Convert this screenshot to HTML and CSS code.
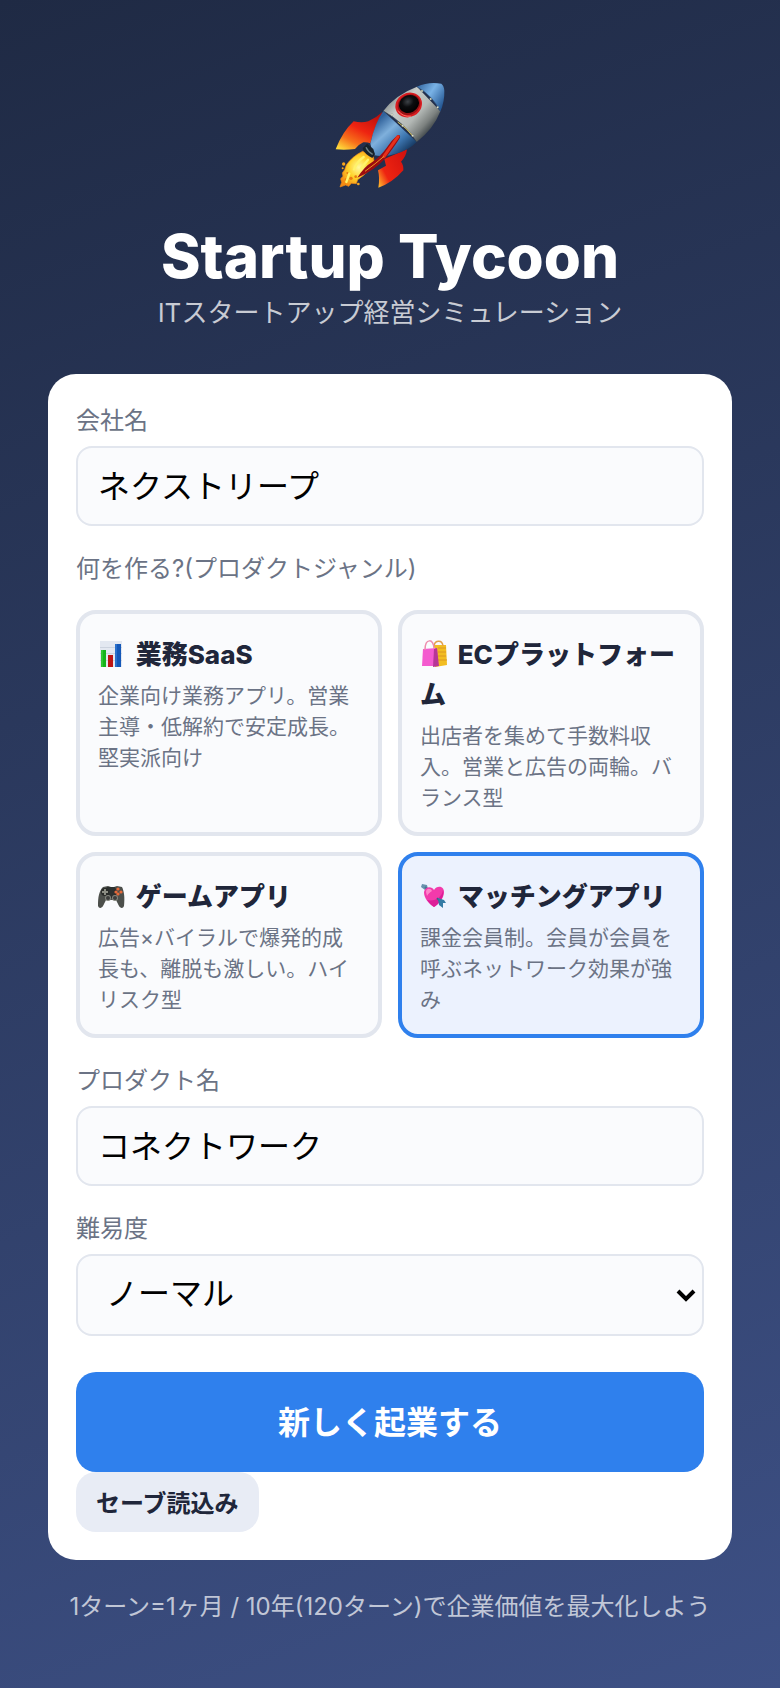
FILE: index.html
```
<!DOCTYPE html>
<html lang="ja">
<head>
  <meta charset="UTF-8">
  <meta name="viewport" content="width=device-width, initial-scale=1">
  <title>Startup Tycoon</title>
  <link rel="stylesheet" href="styles.css">
</head>
<body>

<main class="start">
  <header class="hero">
    <svg class="rocket" viewBox="0 0 480 450" aria-hidden="true">
      <defs>
        <linearGradient id="hull" gradientUnits="userSpaceOnUse" x1="240" y1="120" x2="350" y2="220">
          <stop offset="0" stop-color="#8f9696"/>
          <stop offset=".25" stop-color="#c9cdca"/>
          <stop offset=".6" stop-color="#b4b9b6"/>
          <stop offset=".85" stop-color="#7c817f"/>
          <stop offset="1" stop-color="#444b4e"/>
        </linearGradient>
        <linearGradient id="blue" gradientUnits="userSpaceOnUse" x1="205" y1="180" x2="290" y2="275">
          <stop offset="0" stop-color="#31629b"/>
          <stop offset=".35" stop-color="#7fb0dc"/>
          <stop offset=".7" stop-color="#3d76b0"/>
          <stop offset="1" stop-color="#173a63"/>
        </linearGradient>
        <linearGradient id="nose" x1="0" y1="0" x2="1" y2=".7">
          <stop offset="0" stop-color="#2f629c"/>
          <stop offset=".5" stop-color="#79b2e6"/>
          <stop offset="1" stop-color="#255894"/>
        </linearGradient>
        <linearGradient id="fin" x1=".8" y1="0" x2=".15" y2="1">
          <stop offset="0" stop-color="#b80f0c"/>
          <stop offset=".45" stop-color="#ee2411"/>
          <stop offset=".75" stop-color="#f7701a"/>
          <stop offset="1" stop-color="#ffd83a"/>
        </linearGradient>
        <linearGradient id="fin2" x1="1" y1=".2" x2="0" y2=".9">
          <stop offset="0" stop-color="#d3120e"/>
          <stop offset=".7" stop-color="#ee2411"/>
          <stop offset="1" stop-color="#ffb52c"/>
        </linearGradient>
        <radialGradient id="flame" cx=".55" cy=".45" r=".6">
          <stop offset="0" stop-color="#fff9a0"/>
          <stop offset=".5" stop-color="#ffd42c"/>
          <stop offset="1" stop-color="#f58a12"/>
        </radialGradient>
        <radialGradient id="glass" cx=".5" cy=".35" r=".65">
          <stop offset="0" stop-color="#3d4247"/>
          <stop offset=".45" stop-color="#0b0c0e"/>
          <stop offset="1" stop-color="#000"/>
        </radialGradient>
      </defs>
      <path fill="url(#fin)" d="M218 155Q200 172 175 184Q155 190 131 184Q98 214 77 268Q105 271 135 267Q148 252 160 247Q172 246 181 250Q192 203 218 155Z"/>
      <path fill="url(#fin2)" d="M291 268L223 297L228 317L204 331Q210 354 205 383Q247 369 280 331Q281 315 273 305Q289 289 291 268Z"/>
      <path fill="url(#flame)" stroke="#ee8a16" stroke-width="2" d="M158 274Q127 289 109 315L104 329L97 339L99 349L92 356L95 367L90 381L107 375L116 379L124 370L139 371L143 359Q174 340 193 309L190 290Z"/>
      <g fill="#f9a51d"><circle cx="101" cy="312" r="5"/><circle cx="98" cy="325" r="3"/><circle cx="145" cy="372" r="4"/></g>
      <g fill="#e97912"><circle cx="108" cy="359" r="4"/><circle cx="123" cy="355" r="5"/><circle cx="112" cy="339" r="3"/><circle cx="137" cy="350" r="4"/></g>
      <path fill="none" stroke="#fff36a" stroke-width="7" stroke-linecap="round" d="M161 291Q142 304 132 328M174 299L154 324M118 341L109 366"/>
      <path fill="url(#blue)" d="M220 153Q194 190 181 251L190 285Q221 293 258 281Q297 270 320 246Z"/>
      <path fill="url(#hull)" d="M220 153Q255 105 321 80L391 154Q371 207 320 246Q282 187 220 153Z"/>
      <path fill="url(#nose)" d="M321 80Q356 64 394 71Q402 77 403 92Q404 125 391 154Q369 108 321 80Z"/>
      <path fill="none" stroke="#345780" stroke-width="2" d="M321 80Q369 108 391 154"/>
      <path fill="none" stroke="#324353" stroke-width="2" d="M220 153Q282 187 320 246"/>
      <path fill="none" stroke="#d5be4d" stroke-width="3" d="M263 186Q290 204 308 228"/>
      <g fill="#edf0dd" stroke="#6d7467" stroke-width="1">
        <circle cx="336" cy="93" r="3"/><circle cx="362" cy="117" r="3"/><circle cx="383" cy="142" r="3"/>
        <circle cx="246" cy="164" r="3"/><circle cx="278" cy="197" r="3"/><circle cx="308" cy="227" r="3"/>
      </g>
      <ellipse cx="296" cy="135" rx="41" ry="36" fill="#d91c20" transform="rotate(-28 296 135)"/>
      <ellipse cx="297" cy="134" rx="35" ry="30" fill="#981114" transform="rotate(-28 297 134)"/>
      <ellipse cx="297" cy="132" rx="31" ry="26" fill="url(#glass)" transform="rotate(-28 297 132)"/>
      <path fill="none" stroke="#ff6a62" stroke-width="3" stroke-linecap="round" d="M265 153Q278 171 302 169"/>
      <path fill="#17222a" d="M171 251L158 265Q162 282 187 294L195 283L190 267Z"/>
      <path fill="none" stroke="#6d8187" stroke-width="4" d="M168 262Q174 276 188 283"/>
      <path fill="#9b0c10" d="M263 225Q272 223 270 233Q252 262 224 297Q194 331 142 353Q163 319 188 305Q210 291 230 263Q242 243 263 225Z"/>
      <path fill="none" stroke="#e8301c" stroke-width="9" stroke-linecap="round" d="M264 230Q246 255 222 289"/>
      <path fill="none" stroke="#ee941f" stroke-width="3" d="M222 289Q197 311 165 334"/>
    </svg>
    <h1>Startup Tycoon</h1>
    <p>ITスタートアップ経営シミュレーション</p>
  </header>

  <form class="card" id="startForm">
    <div class="field">
      <label for="company">会社名</label>
      <input type="text" id="company" value="ネクストリープ">
    </div>

    <div class="field">
      <span class="caption" id="genreLabel">何を作る?(プロダクトジャンル)</span>
      <div class="genres" role="group" aria-labelledby="genreLabel">
        <button type="button" class="genre" aria-pressed="false">
          <span class="genre-name"><svg class="emoji" viewBox="0 0 32 28" aria-hidden="true">
            <path fill="#e3e8f1" d="M2 1h22v26H2z"/>
            <path stroke="#ccd3df" d="M2 7.500h22M2 13.500h22M2 20.500h22"/>
            <path fill="#14b31b" d="M3 10h5v17H3z"/><path fill="#bd1515" d="M10 15h5v12h-5z"/><path fill="#1458b8" d="M17 4h6v23h-6z"/>
            <path fill="#2fc531" d="M3 10h2v17H3z"/><path fill="#2a70cc" d="M17 4h2v23h-2z"/>
          </svg> 業務SaaS</span>
          <span class="genre-desc">企業向け業務アプリ。営業主導・低解約で安定成長。堅実派向け</span>
        </button>
        <button type="button" class="genre" aria-pressed="false">
          <span class="genre-name"><svg class="emoji" viewBox="0 0 32 28" aria-hidden="true">
            <path fill="#f2bd22" d="M14 5h12l1 20-12 2z"/>
            <path fill="none" stroke="#dc9820" d="M18 8h8M18 12h8M18 16h8M18 20h9"/>
            <path fill="none" stroke="#e2a04c" stroke-width="1.500" d="M14 7c0-7 8-8 9-1"/>
            <path fill="#f45bcf" d="M3 9l14-1 1 18-16 0z"/>
            <path fill="#b73696" d="M14 9l3-1 2 18-6 1z"/>
            <path fill="none" stroke="#ee8dae" stroke-width="1.500" d="M5 10c0-12 9-12 9-1"/>
          </svg> ECプラットフォーム</span>
          <span class="genre-desc">出店者を集めて手数料収入。営業と広告の両輪。バランス型</span>
        </button>
        <button type="button" class="genre" aria-pressed="false">
          <span class="genre-name"><svg class="emoji" viewBox="0 0 32 28" aria-hidden="true">
            <path fill="#4c4f4b" d="M5 5l5-1 3 1h3l3-1 5 1c2 4 3 10 2 19-1 3-4 2-5 0l-3-6H8l-3 6c-1 2-4 3-5 0C0 15 1 9 5 5z"/>
            <path fill="#2c302f" d="M9 5h8l2 5-2 6H9L6 10z"/>
            <circle cx="7" cy="10" r="4" fill="#292b29"/><path fill="#8b8d83" d="M6 7h2v2h2v2H8v2H6v-2H4V9h2z"/>
            <circle cx="10" cy="16" r="3" fill="#83857d"/><circle cx="17" cy="16" r="3" fill="#83857d"/>
            <circle cx="10" cy="16" r="2" fill="#3b3d3c"/><circle cx="17" cy="16" r="2" fill="#3b3d3c"/>
            <g fill="#e56939"><circle cx="20" cy="7" r="1.600"/><circle cx="18" cy="10" r="1.600"/><circle cx="23" cy="10" r="1.600"/><circle cx="20" cy="12" r="1.600"/></g>
          </svg> ゲームアプリ</span>
          <span class="genre-desc">広告×バイラルで爆発的成長も、離脱も激しい。ハイリスク型</span>
        </button>
        <button type="button" class="genre selected" aria-pressed="true">
          <span class="genre-name"><svg class="emoji" viewBox="0 0 32 28" aria-hidden="true">
            <path fill="#6792ad" d="M2 2l5 1 1 4-3 1-4-3z"/>
            <path stroke="#477594" stroke-width="2" d="M5 5l5 5"/>
            <path fill="#f23aab" d="M14 25C8 21 4 16 4 10c1-6 8-6 10-2 3-5 10-4 10 2 0 6-5 12-10 15z"/>
            <path fill="#ff84ca" d="M6 10c0-4 5-4 6-1-2 1-4 3-5 5z"/>
            <path fill="#dd1f98" d="M23 8c2 7-5 15-9 17-3-2-5-4-7-7 8 2 15-3 16-10z"/>
            <path stroke="#3a627d" stroke-width="1.500" d="M17 16l5 6"/>
            <path fill="#347ba5" d="M18 16l6 2 2 3-3 0 0 5-4-3z"/>
          </svg> マッチングアプリ</span>
          <span class="genre-desc">課金会員制。会員が会員を呼ぶネットワーク効果が強み</span>
        </button>
      </div>
    </div>

    <div class="field">
      <label for="product">プロダクト名</label>
      <input type="text" id="product" value="コネクトワーク">
    </div>

    <div class="field">
      <label for="difficulty">難易度</label>
      <select id="difficulty">
        <option>ノーマル</option>
      </select>
    </div>

    <button type="submit" class="btn-start">新しく起業する</button>
    <button type="button" class="btn-load">セーブ読込み</button>
  </form>

  <p class="note">1ターン=1ヶ月 / 10年(120ターン)で企業価値を最大化しよう</p>
</main>

<script>
  const genres = document.querySelectorAll('.genre');

  genres.forEach(genre => {
    genre.addEventListener('click', function() {
      genres.forEach(item => {
        item.classList.toggle('selected', item === genre);
        item.setAttribute('aria-pressed', item === genre);
      });
    });
  });

  document.getElementById('startForm').addEventListener('submit', function(e) {
    e.preventDefault();
  });
</script>

</body>
</html>
```
FILE: styles.css
```
* {
  box-sizing: border-box;
}
body {
  margin: 0;
  font-family: Inter, "Noto Sans CJK JP", sans-serif;
  color: #20263a;
  background: linear-gradient(160deg, #1f2a44, #3d5085);
  min-height: 100vh;
}
h1, p {
  margin: 0;
}
button, input, select {
  font-family: inherit;
}
.start {
  padding: 60px 48px;
}
.hero {
  text-align: center;
  color: white;
  margin-bottom: 42px;
}
.rocket {
  display: block;
  width: 160px;
  height: 150px;
  margin: 0 auto 8px;
}
.hero h1 {
  font-size: 60px;
  line-height: 76px;
  font-weight: 800;
}
.hero p {
  font-size: 26px;
  line-height: 38px;
  color: rgba(255, 255, 255, 0.75);
}
.card {
  background: white;
  border-radius: 28px;
  padding: 28px;
}
.field {
  margin-bottom: 24px;
}
.field label, .caption {
  display: block;
  font-size: 24px;
  line-height: 38px;
  margin-bottom: 6px;
  color: #6b7385;
}
.field input, .field select {
  display: block;
  width: 100%;
  height: 80px;
  padding: 0 20px 4px;
  font-size: 32px;
  color: black;
  background: #fafbfd;
  border: 2px solid #e2e6ee;
  border-radius: 16px;
}
.field select {
  height: 82px;
  padding: 0 28px 4px;
  appearance: none;
  background: #fafbfd url("data:image/svg+xml,%3Csvg xmlns='http://www.w3.org/2000/svg' width='20' height='14' viewBox='0 0 20 14'%3E%3Cpath d='M2 3l8 8 8-8' fill='none' stroke='black' stroke-width='4'/%3E%3C/svg%3E") no-repeat right 6px center;
}
.genres {
  display: grid;
  grid-template-columns: 1fr 1fr;
  gap: 16px;
  margin-top: 22px;
}
.genre {
  display: flex;
  flex-direction: column;
  gap: 5px;
  padding: 21px 18px 19px;
  text-align: left;
  color: #20263a;
  background: #fafbfd;
  border: 4px solid #e2e6ee;
  border-radius: 20px;
  cursor: pointer;
}
.genre.selected {
  background: #ecf2fe;
  border-color: #2f80ed;
}
.genre-name {
  font-size: 26px;
  line-height: 40px;
  font-weight: 800;
}
.emoji {
  width: 32px;
  height: 28px;
  vertical-align: -4px;
}
.genre-desc {
  font-size: 21px;
  line-height: 31px;
  color: #6b7385;
}
.btn-start {
  display: block;
  width: 100%;
  height: 100px;
  margin-top: 36px;
  padding: 0 20px 4px;
  font-size: 32px;
  font-weight: 700;
  color: white;
  background: #2f80ed;
  border: none;
  border-radius: 20px;
  cursor: pointer;
}
.btn-load {
  display: block;
  height: 60px;
  padding: 0 20px 2px;
  font-size: 24px;
  font-weight: 600;
  color: #20263a;
  background: #e8ecf5;
  border: none;
  border-radius: 20px;
  cursor: pointer;
}
.note {
  margin-top: 28px;
  font-size: 24px;
  line-height: 38px;
  text-align: center;
  color: rgba(255, 255, 255, 0.7);
}
```
